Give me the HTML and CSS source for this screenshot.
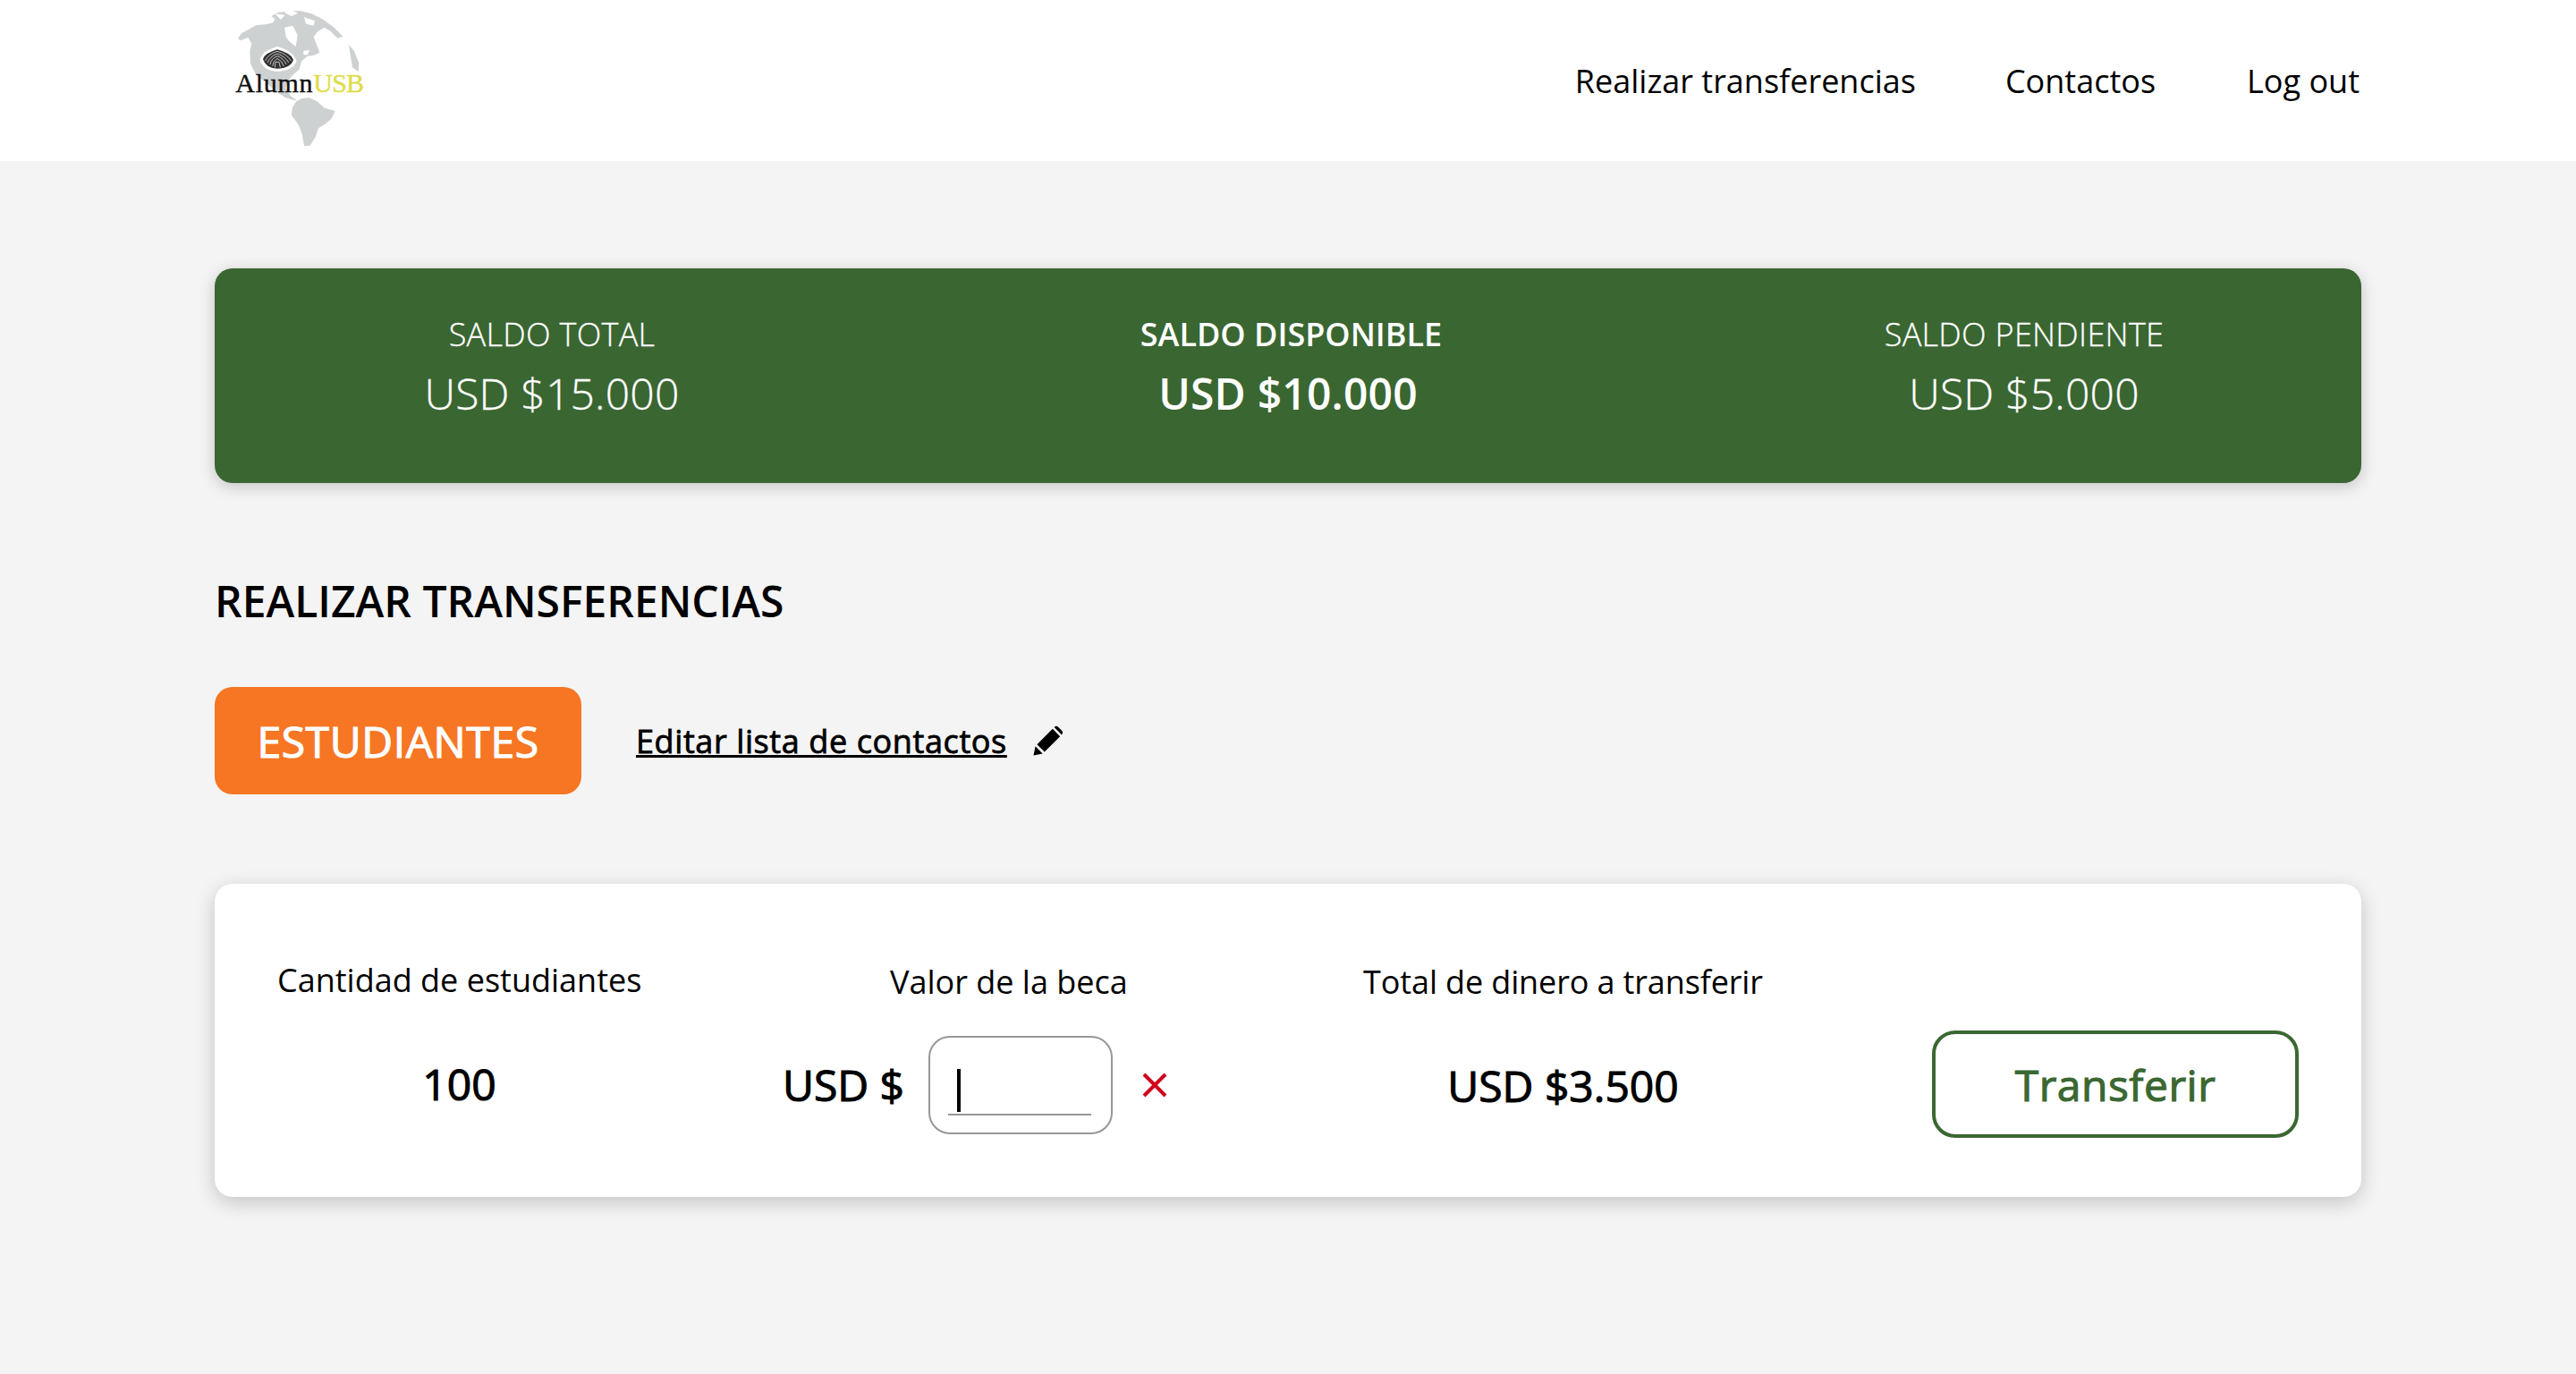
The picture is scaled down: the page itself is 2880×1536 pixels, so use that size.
FILE: index.html
```html
<!DOCTYPE html>
<html lang="es">
<head>
  <meta charset="UTF-8">
  <title>Realizar transferencias</title>
  <link rel="stylesheet" href="styles.css">
</head>
<body>
<div class="header">
  <svg class="logo" viewBox="0 0 660 540" width="220" height="180">
    <g fill="#cdd1d1">
      <path d="M138 128 L150 112 L172 100 L200 84 L232 82 L256 76 L262 64 L250 54 L272 42 L310 38 L345 36 L385 46 L425 66 L462 94 L490 122 L472 128 L448 104 L428 92 L405 106 L392 124 L402 150 L412 176 L392 186 L372 188 L352 204 L344 232 L318 256 L306 272 L298 294 L314 322 L338 338 L318 334 L296 326 L264 306 L232 276 L198 250 L180 214 L178 170 L184 146 L172 126 L146 136 Z"/>
      <path d="M320 362 L332 342 L352 330 L378 328 L404 340 L428 362 L464 372 L452 398 L428 418 L408 430 L398 460 L380 488 L360 490 L354 452 L342 420 L318 386 Z"/>
      <path d="M510 150 L528 172 L544 212 L542 240 L522 226 L516 190 Z"/>
    </g>
    <g fill="#fff">
      <path d="M294 92 L322 86 L338 118 L332 156 L312 140 L300 126 Z"/>
      <path d="M262 46 L296 50 L282 66 Z"/>
      <path d="M360 58 L396 70 L392 86 L366 80 Z"/>
      <path d="M300 28 L340 44 L318 54 L296 44 Z"/>
      <path d="M358 170 L378 168 L372 184 L358 184 Z"/>
      <path d="M212 200 Q218 172 270 156 Q326 172 334 205 Q326 236 270 240 Q220 236 212 200 Z"/>
    </g>
    <path class="logo-dome" d="M222 198 Q228 178 270 166 Q316 178 324 200 Q316 228 270 230 Q230 228 222 198 Z"/>
    <g class="logo-lines">
      <path d="M230 204 Q238 182 270 172 Q304 182 316 204"/>
      <path d="M238 210 Q244 190 270 180 Q298 190 308 210"/>
      <path d="M246 216 Q250 196 270 188 Q292 196 300 216"/>
      <path d="M254 222 Q256 204 270 196 Q286 204 292 222"/>
      <path d="M262 226 L264 208 L276 208 L280 226"/>
    </g>
    <text class="logo-text" x="130" y="310">Alumn<tspan class="logo-usb">USB</tspan></text>
  </svg>
  <div class="nav">
    <a>Realizar transferencias</a>
    <a>Contactos</a>
    <a class="nav-salir">Log out</a>
  </div>
</div>
<div class="main">
  <div class="saldos">
    <div class="saldo">
      <p class="saldo-label">SALDO TOTAL</p>
      <p class="saldo-valor">USD $15.000</p>
    </div>
    <div class="saldo saldo-activo">
      <p class="saldo-label">SALDO DISPONIBLE</p>
      <p class="saldo-valor">USD $10.000</p>
    </div>
    <div class="saldo">
      <p class="saldo-label">SALDO PENDIENTE</p>
      <p class="saldo-valor">USD $5.000</p>
    </div>
  </div>

  <h1 class="titulo">REALIZAR TRANSFERENCIAS</h1>

  <div class="acciones">
    <button class="btn-estudiantes">ESTUDIANTES</button>
    <a class="editar">Editar lista de contactos</a>
    <svg class="lapiz" viewBox="0 0 24 24" width="36" height="36">
      <path d="M1 23 L2.4 16.2 L7.8 21.6 Z M3.6 14.8 L15.2 3.2 L20.8 8.8 L9.2 20.4 Z M16.6 1.8 Q18 0.6 19.4 1.8 L22.2 4.6 Q23.4 6 22.2 7.4 L22 7.6 L16.4 2 Z"/>
    </svg>
  </div>

  <div class="tarjeta">
    <div class="col col-cantidad">
      <p class="col-label">Cantidad de estudiantes</p>
      <p class="col-valor">100</p>
    </div>
    <div class="col col-beca">
      <p class="col-label">Valor de la beca</p>
      <div class="beca-fila">
        <span class="col-valor">USD $</span>
        <div class="campo"><div class="campo-linea"><span class="caret"></span></div></div>
        <svg class="cerrar" viewBox="0 0 28 28" width="28" height="28">
          <path d="M2 2 L26 26 M26 2 L2 26"/>
        </svg>
      </div>
    </div>
    <div class="col col-total">
      <p class="col-label">Total de dinero a transferir</p>
      <p class="col-valor">USD $3.500</p>
    </div>
    <button class="btn-transferir">Transferir</button>
  </div>
</div>
</body>
</html>
```

FILE: styles.css
```css
body {
  margin: 0;
  background-color: #f4f4f4;
  color: #000;
  font-family: "Open Sans", "Noto Sans", sans-serif;
}

p {
  margin: 0;
}

.header {
  height: 180px;
  padding: 0 242px 0 220px;
  background-color: #fff;
  display: flex;
  align-items: center;
  justify-content: space-between;
}

.logo-dome {
  fill: #333;
}

.logo-lines {
  fill: none;
  stroke: #ddd;
  stroke-width: 2.5;
}

.logo-text {
  font-family: "Liberation Serif", serif;
  font-size: 90px;
  letter-spacing: 2.2px;
  fill: #111;
  stroke: #111;
  stroke-width: 1.2;
}

.logo-usb {
  letter-spacing: -2.4px;
  fill: #dfdc4c;
  stroke: #dfdc4c;
}

.nav {
  display: flex;
  gap: 100px;
  font-size: 36px;
}

.nav-salir {
  margin-left: 2px;
}

.main {
  height: 1356px;
  box-sizing: border-box;
  padding: 120px 240px 0;
}

.saldos {
  height: 240px;
  box-sizing: border-box;
  padding-bottom: 18px;
  background-color: #3a6632;
  border-radius: 20px;
  box-shadow: 0 4px 18px rgba(0, 0, 0, 0.2);
  color: #fff;
  display: grid;
  grid-template-columns: repeat(3, 754px);
  justify-content: space-between;
  align-content: center;
  text-align: center;
  font-weight: 300;
  -webkit-text-stroke: 0.3px #fff;
}

.saldo-label {
  font-size: 36px;
  line-height: 50px;
  letter-spacing: 0.3px;
}

.saldo-valor {
  font-size: 48px;
  line-height: 66px;
  margin-top: 8px;
  letter-spacing: 0.2px;
}

.saldo-activo {
  font-weight: 600;
  -webkit-text-stroke: 0;
}

.saldo-activo .saldo-label {
  margin-left: 7px;
  letter-spacing: 0;
}

.titulo {
  margin: 100px 0 0;
  font-size: 48px;
  line-height: 64px;
  font-weight: 600;
}

.acciones {
  margin-top: 64px;
  display: flex;
  align-items: center;
}

.btn-estudiantes {
  width: 410px;
  height: 120px;
  padding: 0;
  border: 0;
  border-radius: 20px;
  background-color: #f67623;
  color: #fff;
  font-family: inherit;
  font-size: 48px;
  letter-spacing: 0.6px;
  -webkit-text-stroke: 1.2px #fff;
}

.editar {
  margin-left: 61px;
  font-size: 36px;
  letter-spacing: 0.6px;
  -webkit-text-stroke: 0.8px #000;
  text-decoration: underline;
}

.lapiz {
  margin-left: 28px;
}

.tarjeta {
  margin-top: 100px;
  height: 350px;
  box-sizing: border-box;
  padding: 83px 70px 0;
  background-color: #fff;
  border-radius: 20px;
  box-shadow: 0 6px 22px rgba(0, 0, 0, 0.2);
  display: grid;
  grid-template-columns: 565px 649px 636px 410px;
}

.col-label {
  font-size: 36px;
  line-height: 50px;
  white-space: nowrap;
}

.col-valor {
  font-size: 48px;
  line-height: 66px;
  -webkit-text-stroke: 1.1px #000;
}

.col-cantidad {
  width: 407px;
  text-align: center;
}

.col-cantidad .col-valor {
  margin-top: 58px;
}

.col-beca .col-label {
  margin: 2px 0 0 120px;
}

.beca-fila {
  margin-top: 35px;
  display: flex;
  align-items: center;
}

.campo {
  width: 206px;
  height: 110px;
  box-sizing: border-box;
  margin-left: 27px;
  padding: 0 22px 0 20px;
  border: 2px solid #979797;
  border-radius: 24px;
}

.campo-linea {
  height: 87px;
  box-sizing: border-box;
  padding: 35px 0 0 10px;
  border-bottom: 2px solid #979797;
}

.caret {
  display: block;
  width: 4px;
  height: 48px;
  background-color: #000;
}

.cerrar {
  margin-left: 33px;
  stroke: #d0021b;
  stroke-width: 4;
}

.col-total {
  width: 447px;
  padding-top: 2px;
  text-align: center;
}

.col-total .col-label {
  letter-spacing: -0.13px;
}

.col-total .col-valor {
  margin-top: 58px;
}

.btn-transferir {
  width: 410px;
  height: 120px;
  margin-top: 81px;
  padding: 0;
  border: 4px solid #3b6732;
  border-radius: 26px;
  background-color: #fff;
  color: #3b6732;
  font-family: inherit;
  font-size: 48px;
  letter-spacing: 0.5px;
  -webkit-text-stroke: 1.1px #3b6732;
}
```
